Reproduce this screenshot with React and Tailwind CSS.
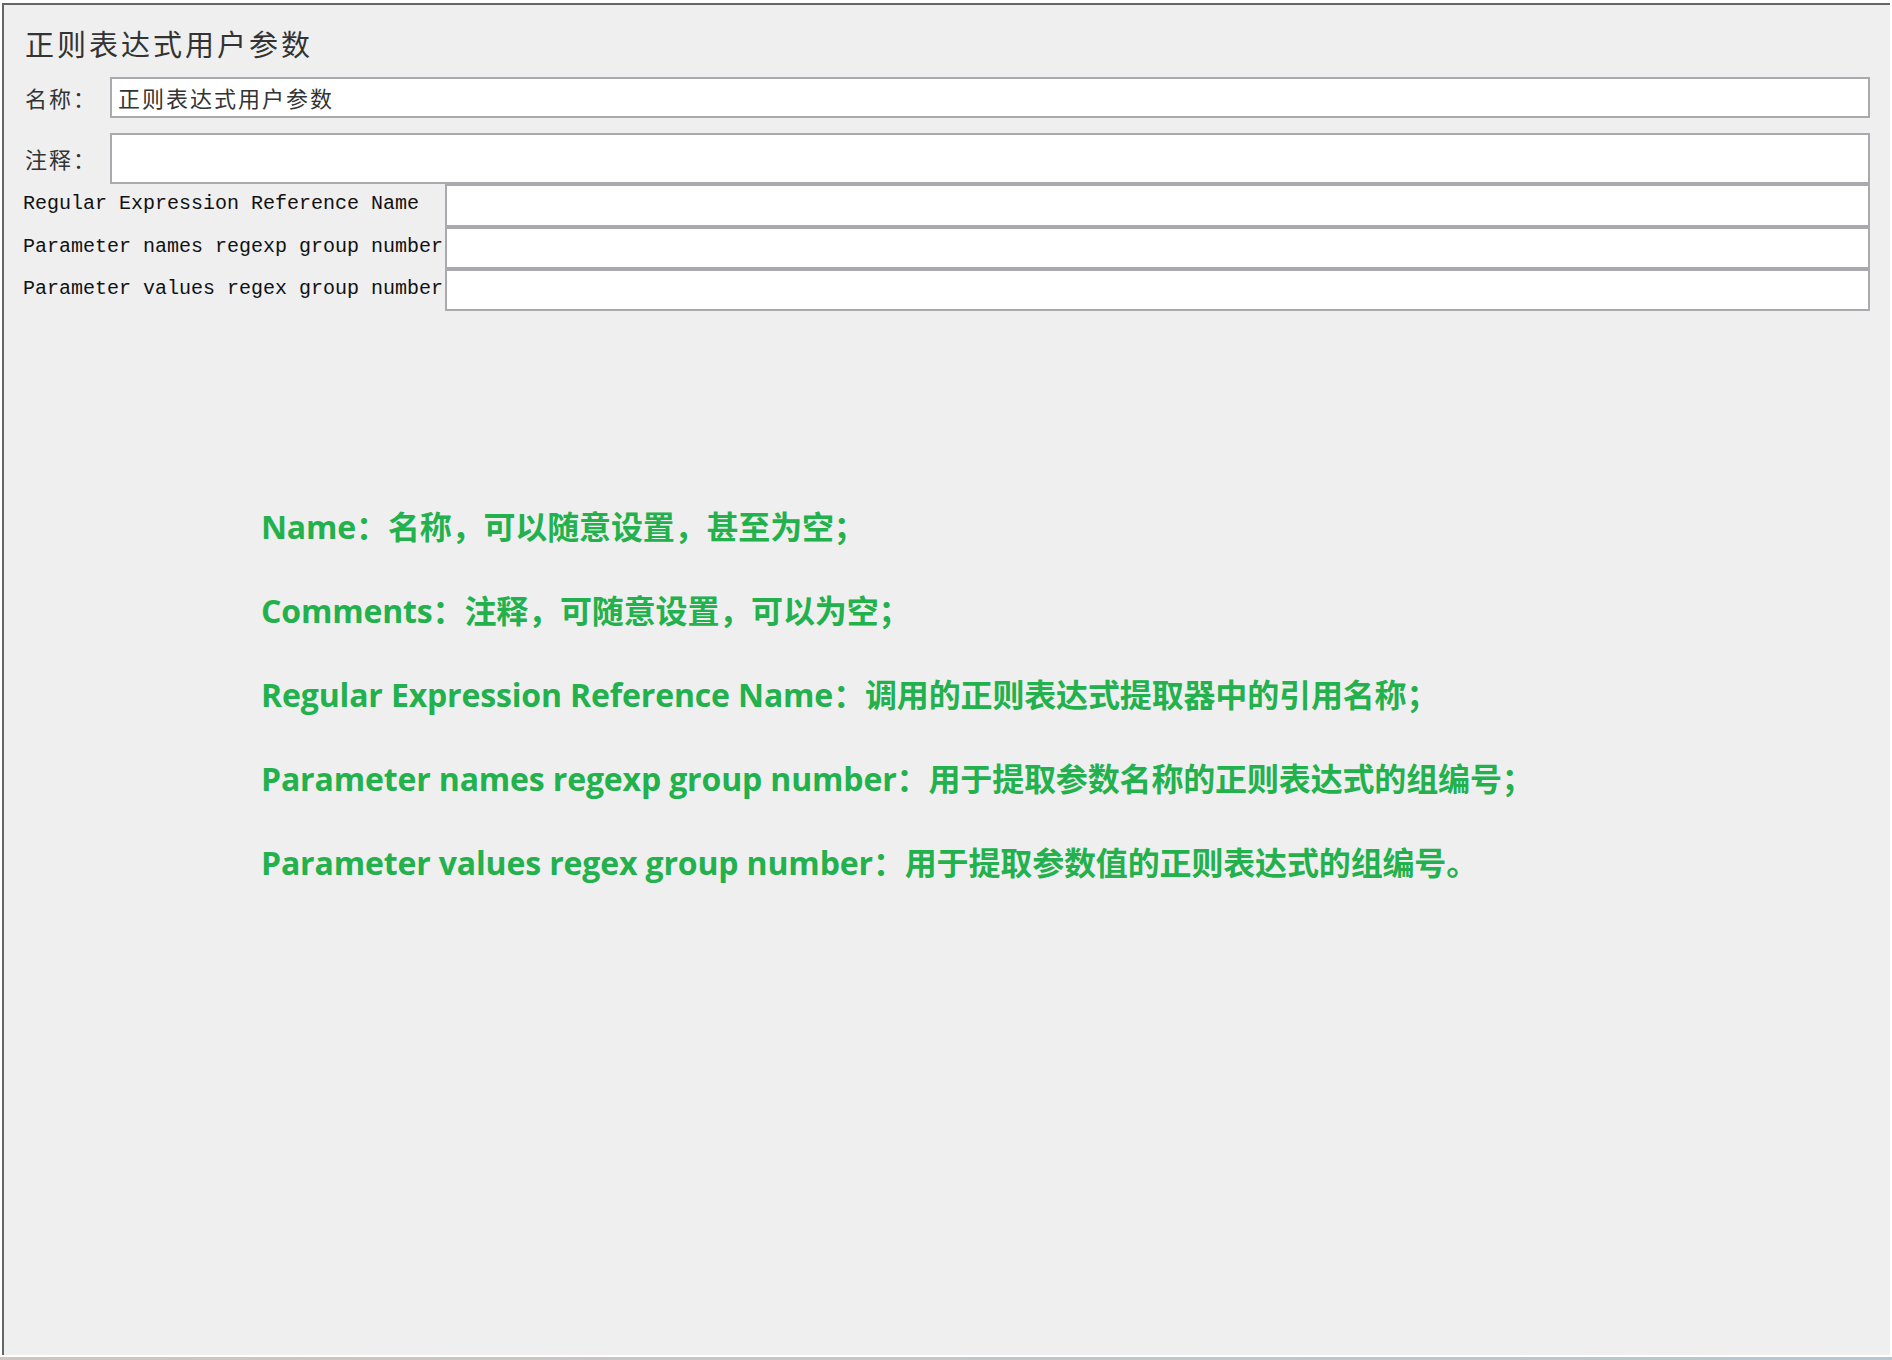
import React from "react";

const cjk = { fontFamily: '"Noto Sans CJK SC", "Noto Sans", sans-serif' };
const mono = { fontFamily: '"Liberation Mono", "Noto Sans CJK SC", monospace' };
const green = { fontFamily: '"Open Sans", "Noto Sans CJK SC", sans-serif' };

function Field({ children, className = "" }) {
  return (
    <div className={"flex-1 h-full bg-white border-2 border-[#a9a9ae] flex items-center pl-[6px] " + className}>
      {children}
    </div>
  );
}

const notes = [
  ["Name", "名称，可以随意设置，甚至为空；"],
  ["Comments", "注释，可随意设置，可以为空；"],
  ["Regular Expression Reference Name", "调用的正则表达式提取器中的引用名称；"],
  ["Parameter names regexp group number", "用于提取参数名称的正则表达式的组编号；"],
  ["Parameter values regex group number", "用于提取参数值的正则表达式的组编号。"],
];

export default function App() {
  return (
    <div className="w-[1892px] h-[1360px] bg-white flex flex-col overflow-hidden">
      <div className="ml-[2px] mt-[3px] w-[1888px] h-[1352px] border-t-2 border-l-2 border-[#666666] bg-[#efefef] flex flex-col text-[#333333]">
        <div className="ml-[21px] mt-[23px] h-[30px] leading-[30px] text-[29px] tracking-[3px]" style={cjk}>
          正则表达式用户参数
        </div>
        <div className="mt-[19px] h-[41px] flex items-center mr-[20px]">
          <div className="w-[106px] pl-[21px] text-[22px] tracking-[2px]" style={cjk}>名称：</div>
          <Field>
            <span className="text-[22px] tracking-[2px] text-[#333333]" style={cjk}>正则表达式用户参数</span>
          </Field>
        </div>
        <div className="mt-[15px] h-[51px] flex items-center mr-[20px]">
          <div className="w-[106px] pl-[21px] text-[22px] tracking-[2px]" style={cjk}>注释：</div>
          <Field />
        </div>
        {[
          ["Regular Expression Reference Name", "h-[43px]"],
          ["Parameter names regexp group number", "h-[42px]"],
          ["Parameter values regex group number", "h-[42px]"],
        ].map(([label, h]) => (
          <div key={label} className={"flex items-center mr-[20px] " + h}>
            <div className="w-[441px] shrink-0 pl-[19px] text-[20px] leading-[24px] whitespace-pre text-[#111111] pb-[3px]" style={mono}>
              {label}
            </div>
            <Field />
          </div>
        ))}
        <div className="mt-[174px] ml-[257px] flex flex-col text-[32px] leading-[84px] font-bold tracking-[-0.15px] text-[#22b14c]" style={green}>
          {notes.map(([en, zh]) => (
            <div key={en} className="whitespace-pre">
              {en}：{zh}
            </div>
          ))}
        </div>
      </div>
      <div className="mt-[2px] h-[3px] w-full bg-gradient-to-r from-[#cfc5be] via-[#c4c6c8] to-[#b8c6ce]" />
    </div>
  );
}
